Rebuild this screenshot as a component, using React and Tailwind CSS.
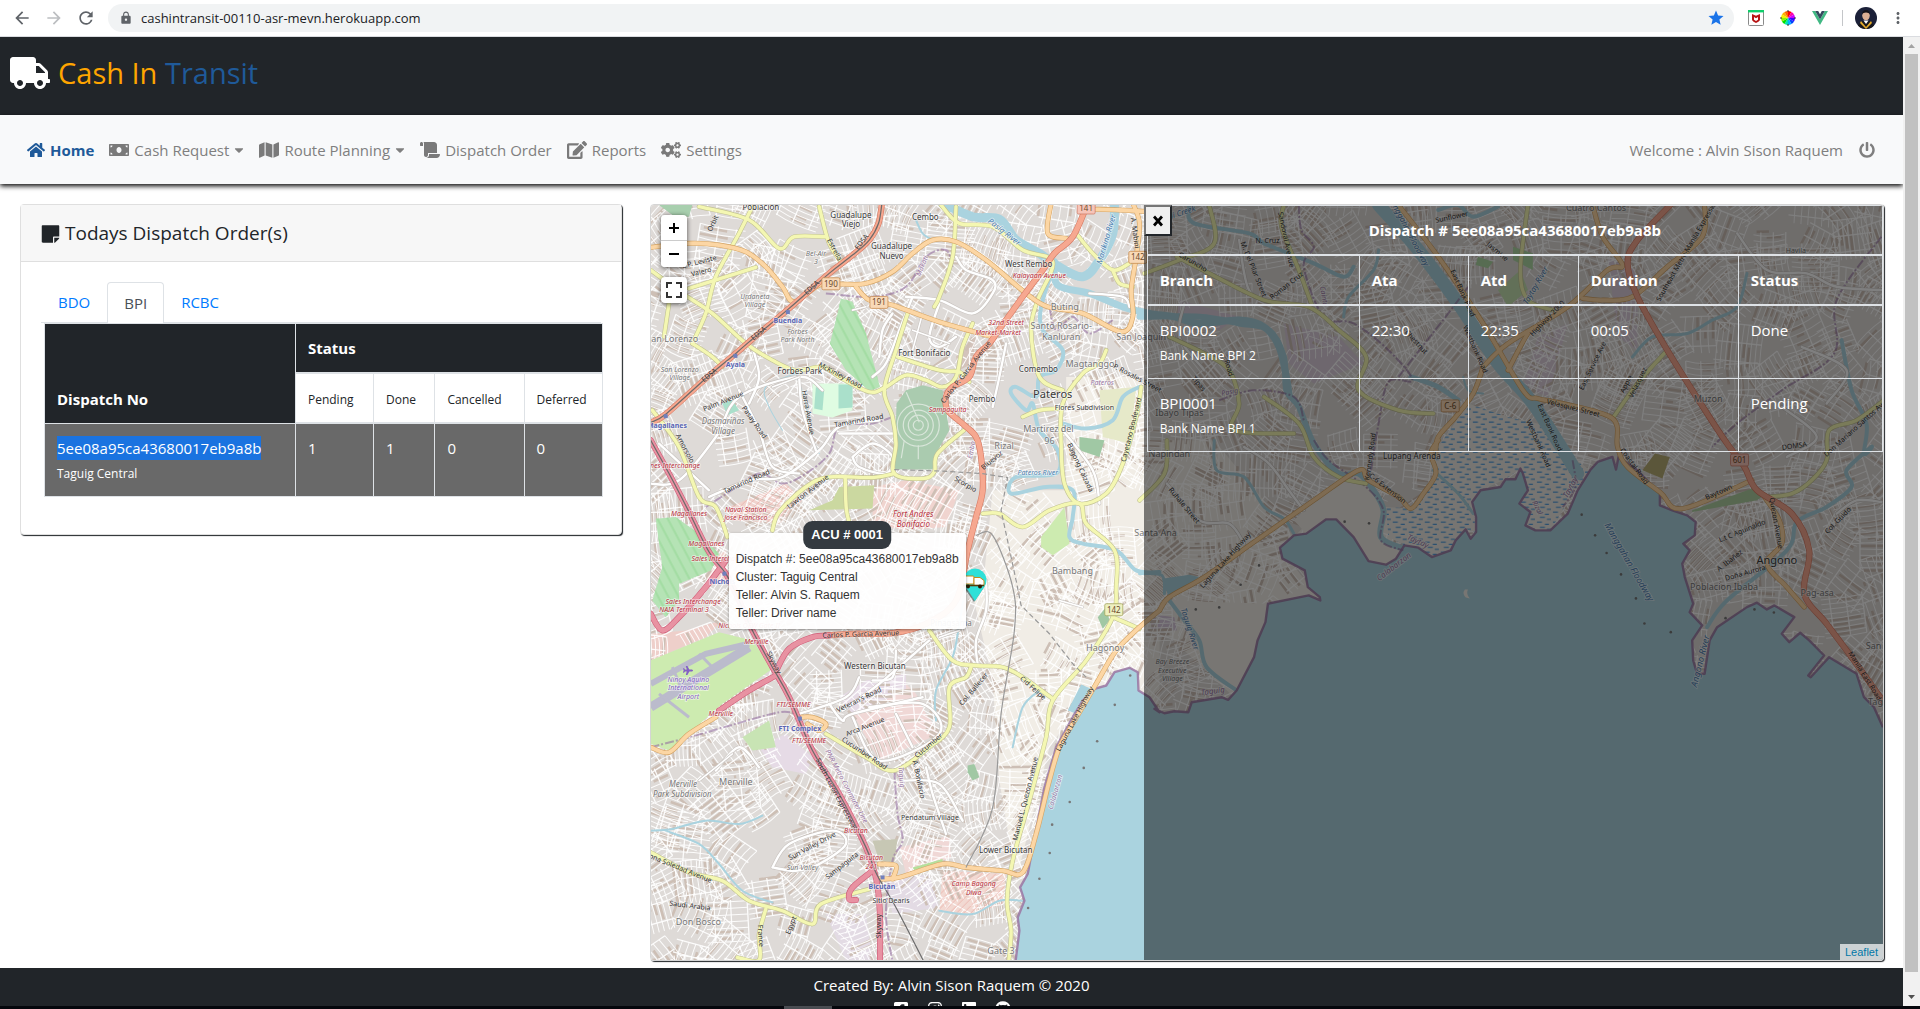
import React from "react";
import {
  FaTruck, FaHome, FaMoneyBill, FaMap, FaScroll, FaEdit, FaCogs, FaPowerOff,
  FaStickyNote, FaFacebookSquare, FaInstagram, FaLinkedin, FaGithub, FaCaretDown, FaPlane,
} from "react-icons/fa";
import { MdArrowBack, MdArrowForward, MdRefresh, MdLock, MdStar, MdMoreVert } from "react-icons/md";

/* ---------- Map geometry ---------- */

// Each survey sheet has its own origin and scale; shapes are stored in sheet units.
const SHEETS = {
  nw: [640, 190, 1 / 3, 1 / 3],
  sw: [640, 580, 1 / 3, 1 / 3],
  ne: [1140, 190, 0.4974, 1 / 3],
  se: [1140, 440, 0.4974, 1 / 3],
};

function project(sheet, x, y) {
  const [ox, oy, sx, sy] = SHEETS[sheet];
  return [Math.round((ox + x * sx) * 10) / 10, Math.round((oy + y * sy) * 10) / 10];
}

// "nw 1,2 3,4 sw 5,6" becomes a list of projected points.
function points(text) {
  let sheet = "nw";
  const out = [];
  for (const token of text.trim().split(/\s+/)) {
    if (SHEETS[token]) sheet = token;
    else {
      const [x, y] = token.split(",").map(Number);
      out.push(project(sheet, x, y));
    }
  }
  return out;
}

function area(text) {
  return "M" + points(text).map((p) => p.join(",")).join("L") + "Z";
}

function line(text) {
  return "M" + points(text).map((p) => p.join(",")).join("L");
}

function curve(text) {
  const p = points(text);
  let d = `M${p[0].join(",")}`;
  for (let i = 0; i < p.length - 1; i++) {
    const a = p[i - 1] || p[i];
    const b = p[i];
    const c = p[i + 1];
    const e = p[i + 2] || c;
    const r = (n) => Math.round(n * 10) / 10;
    d += `C${r(b[0] + (c[0] - a[0]) / 6)},${r(b[1] + (c[1] - a[1]) / 6)} ${r(c[0] - (e[0] - b[0]) / 6)},${r(c[1] - (e[1] - b[1]) / 6)} ${c[0]},${c[1]}`;
  }
  return d;
}

const SHORE =
  "sw 1128,1145 1140,1050 1135,1010 1155,960 1142,920 1165,880 1180,800 1215,620 1250,500 1300,410 1330,360 1365,325 1400,315 1425,275 1470,262 1495,275 1497,330 1530,350 1560,395 " +
  "se 30,805 50,818 70,812 98,815 105,785 165,770 178,778 195,750 230,650 237,600 253,545 258,490 340,465 363,480 362,470 338,440 332,390 287,355 282,322 310,285 335,280 375,237 395,237 430,290 460,362 495,373 515,355 532,315 560,322 587,350 625,330 635,300 655,267 665,295 676,275 676,230 668,185 685,150 725,140 735,117 755,117 765,85 770,100 780,150 763,190 785,215 775,255 795,270 825,270 860,220 880,150 905,90 920,65 950,50 957,88 962,50 1000,90 1045,160 1045,195 1070,210 1100,225 1117,245 1115,285 1092,310 1105,330 1090,370 1095,410 1112,490 1105,515 1130,555 1110,600 1112,660 1120,700 1135,700 1145,600 1160,560 1220,500 1240,487 1260,507 1275,495 1315,530 1290,580 1305,605 1327,577 1345,600 1375,645 1343,705 1348,710 1385,650 1440,700 1455,770 1475,800 1493,860";

const LAKE = SHORE + " 1493,1570 sw 1128,1145";

const MOTORWAY = [
  "nw 35,750 90,850 150,965 210,1085 260,1150 sw 300,60 340,150 400,260 450,350 520,510 600,640 680,800 712,900 722,1000 722,1145",
  "sw 412,270 450,205 520,170 570,165",
  "sw 410,285 330,330 240,390",
  "sw 35,100 70,150 120,110 200,20 260,-60",
  "sw 700,870 640,920 630,955 650,958",
];

const TRUNK = [
  "nw 728,40 718,100 690,150 640,195 570,250 450,355 330,455 290,490 200,565 80,672 35,697",
  "sw 560,165 640,160 760,158 860,130 950,60 nw 985,1080 1010,980 1030,900 1025,800 1010,740 975,705 925,660 920,620 940,590 990,560 1010,500 1050,460 1085,410 1150,320 1210,240 1245,190 1300,140 1345,40",
  "ne 1068,42 1000,150 980,220 1000,320 1060,480 1140,670 1180,760 1215,830 se 1240,150 1310,220 1345,330 1335,460 1380,550 1430,650 1495,785",
];

const PRIMARY = [
  "nw 35,172 150,160 240,165 320,185 380,230 430,290 465,335 540,285 600,282 680,280 760,245 820,190 880,150 950,155 1040,210 1160,310 1225,350 1330,370 1445,425 1480,380 1475,300 1490,200 1500,100 1480,40",
  "nw 650,290 690,330 760,345 900,395 1060,440",
  "nw 1235,40 1225,130 1280,145",
  "nw 1370,58 1440,60 1530,65",
  "sw 1560,90 1500,140 1430,210 1370,310 1300,430 1260,500 1230,600 1190,760 1150,875 1090,870 980,860 910,850 780,890 720,895",
  "sw 1560,90 se 60,470 130,410 230,305 350,180 440,90 460,120 520,170 545,205 570,160 595,100 585,40 600,0",
  "sw 35,500 90,515 150,460 230,410",
  "ne 520,45 600,200 690,400 770,600 800,625 850,640 950,685 960,770 980,830 se 1045,155 1090,205 1230,120",
  "ne 690,530 740,460 860,350 940,240 970,225 930,140 910,45",
  "ne 1135,45 1130,140 1060,230 990,320 930,330 890,325",
  "ne 690,530 670,610 635,680 600,740 595,790",
  "ne 740,540 780,430 800,410",
  "se 1255,170 1285,240 1290,310 1260,370 1300,440 1335,500",
  "sw 485,410 520,410 560,430 540,450 505,430",
  "sw 720,850 770,855 760,895",
];

const SECONDARY = [
  "nw 180,50 330,90 420,175 465,140 560,140",
  "nw 340,50 300,130 230,260 200,370 160,460",
  "nw 150,295 350,232",
  "nw 35,240 130,310 220,370 320,460 400,510 470,540 550,530 600,560 690,605 740,590 800,555 860,570 910,590 950,560 970,470 1000,400",
  "nw 90,340 75,440",
  "nw 160,460 220,500 250,530",
  "nw 540,50 570,160 610,220",
  "nw 950,50 940,200 900,320 885,350",
  "nw 805,370 770,480 735,600 760,680 770,760 765,850 850,865 885,845 895,790 980,715",
  "nw 765,850 700,862 570,860 500,890 420,965 400,1020",
  "nw 618,862 622,960 640,1030",
  "nw 775,500 900,540 960,545 990,575",
  "nw 905,45 960,100 1060,110 1150,180 1240,215 1195,330 1175,420 1200,560 1270,600",
  "nw 1400,480 1380,520 1330,550 1270,640 1265,760 1275,880 1320,940 1400,910 1450,820 1490,680 1505,590",
  "nw 1150,680 1200,660 1265,655",
  "nw 1030,970 1080,970 1150,1010 1230,960 1320,940 1340,1000 1425,1080 1430,1190 sw 1420,110 1340,240 1240,360 1220,470 1170,660 1120,840 1103,960 1115,1050 1108,1145",
  "nw 1310,130 1360,190 1420,240 1470,220",
  "nw 1420,240 1440,280 1480,290",
  "sw 870,150 940,240 1010,255 1090,260 1150,290 1240,355",
  "sw 995,260 980,290 930,320 930,440 870,500 765,570 680,530 560,460",
  "sw 35,815 150,875 250,900 330,960 430,990 520,1030 545,970 690,925",
  "sw 380,985 360,1060 360,1138 295,1130",
  "sw 1420,110 1500,145",
  "nw 40,660 120,770 180,920 230,950 265,1040",
  "ne 10,250 80,210 150,160 140,45",
  "ne 75,200 140,250 250,330 340,350 400,420 455,500 440,600 520,660 590,670",
  "ne 290,45 285,110 320,240 345,340",
  "ne 60,440 130,490 180,540 200,640 190,720 310,730",
  "ne 780,45 765,240 780,330 830,360",
  "ne 1060,480 1000,580 950,685",
  "ne 1495,630 1440,690 1385,720 se 1380,60 1350,120 1310,160 1260,170",
  "ne 250,620 320,700 350,800 400,860 se 455,130",
  "se 55,0 50,100 0,180",
];

const STREETS = [
  "nw 800,320 900,330 1000,370 1060,310 1060,270 980,240 950,200",
  "nw 820,320 780,420 740,520 700,560", "nw 900,340 870,440 900,470 950,440",
  "nw 720,500 730,420 760,370", "nw 30,880 120,870 230,740 300,620 480,560 550,600",
  "nw 300,600 360,720 400,830 480,850", "nw 480,560 490,660 530,780",
  "nw 210,920 330,870 430,860 540,780 600,710 720,690", "nw 600,730 760,730",
  "nw 640,800 700,760 760,800 740,850 660,830 640,800", "nw 340,470 360,560 330,640",
  "nw 1100,460 1080,560 1060,650", "nw 1350,310 1450,320 1470,350",
  "nw 1270,720 1360,840 1380,940", "nw 60,760 210,900",
  "sw 570,370 610,420 640,400 850,350", "sw 690,380 850,370 900,460 720,540 640,410",
  "sw 770,400 820,500", "sw 610,390 720,310 870,180", "sw 770,210 760,290 700,300",
  "sw 480,400 620,350 660,290", "sw 1040,0 1040,90 1010,180 1015,250",
  "sw 400,860 450,790 580,750 620,790 540,850 470,870 400,860",
  "sw 790,600 900,610 970,720", "sw 230,570 300,500 360,560", "sw 860,560 880,640 920,760",
  "ne 90,340 80,440 130,540", "ne 200,150 220,300 270,340", "ne 1200,130 1260,240 1340,250 1400,290 1490,300",
  "ne 1330,470 1420,540 1380,640", "se 55,130 120,240 180,250 210,310", "ne 1290,650 1360,740 1300,800",
  "se 1400,220 1440,180 1490,185", "se 210,20 260,70 300,150 330,210",
];

const WHITE_ALLEYS = [
  "nw 820,420 930,460", "nw 850,370 820,480", "nw 640,360 680,350", "nw 400,590 480,560",
  "sw 180,600 280,520", "sw 900,170 960,150", "sw 1260,60 1330,80",
];

const RIVERS = [
  { d: "nw 910,40 1000,80 1080,88 1130,150 1200,190 1250,225 1330,260 1380,210 1420,130 1425,40", w: 9 },
  { d: "nw 1245,215 1255,285 1350,310 1450,350 1530,370 ne 70,380 120,400 200,390 250,410 280,470 295,560 300,610", w: 7 },
  { d: "nw 1240,240 1205,350 1210,420 1270,480 1250,540 1200,560 1190,620 1130,590 1115,610 1160,660 1180,640 1200,720 1255,780 1250,850 1130,860 1115,910 1220,890 1300,900 1300,980 1290,1040 1330,1060 1430,1080 1490,1140 1560,1145", w: 4 },
  { d: "nw 1270,700 1340,715 1420,690 1450,620 1500,590", w: 4 },
  { d: "nw 830,90 850,130 880,150", w: 2 },
  { d: "nw 470,550 380,590 390,650 430,720", w: 1 },
  { d: "nw 470,550 500,640 510,720 540,790", w: 1 },
  { d: "sw 35,750 100,745 200,720 300,730 370,705", w: 2 },
  { d: "sw 80,750 180,790 240,850 310,930 400,965", w: 2 },
  { d: "sw 980,10 960,130 940,230 890,330 890,420", w: 2 },
  { d: "sw 1200,330 1150,380 1120,500", w: 2 },
  { d: "sw 900,990 1000,1000 1080,960 1150,960", w: 2 },
  { d: "ne 480,45 560,180 640,340 720,520 790,640 880,850", w: 13 },
  { d: "ne 100,50 110,100 220,130 250,160 350,220 410,260 430,230", w: 4 },
  { d: "ne 600,60 640,45 670,80 720,50", w: 4 },
  { d: "ne 0,380 120,380 200,400 260,420 290,500 295,600 320,650 350,760 400,850 se 440,100 470,150 490,210 485,290 530,325", w: 6 },
  { d: "ne 410,380 420,320 470,240 480,180", w: 3 },
  { d: "ne 545,560 600,590 640,630", w: 5 },
  { d: "ne 990,500 1030,440 1100,430 1150,390 1200,350 1220,250", w: 3 },
  { d: "ne 1410,450 1430,600 1460,700 1455,790 se 1470,20 1420,90 1430,140 1380,200 1320,245 1300,330 1180,480 1140,560", w: 4 },
  { d: "se 150,0 155,90 210,110 250,200 290,235 310,280", w: 3 },
  { d: "se 60,480 90,540 120,600 135,680 195,750", w: 4 },
  { d: "se 0,400 45,405 50,460", w: 3 },
  { d: "se 590,90 640,160 670,220", w: 3 },
  { d: "ne 650,560 660,600 690,610", w: 2 },
];

const BORDERS = [
  "nw 560,310 700,320 800,290 860,200 920,180 940,230",
  "nw 1230,350 1250,420 1300,380 1350,430 1420,390",
  "nw 760,680 700,700 600,710 570,790 500,850 430,880 360,850 270,905 200,950",
  "sw 35,500 150,470 290,430 420,395 470,400",
  "sw 765,570 775,700 790,780 760,840 740,1000 760,1145",
  "ne 320,45 325,120 350,170 330,230 370,380 430,400 500,480 548,570 500,575 480,700 465,840",
  "ne 160,630 230,600 310,620 330,690",
  "ne 1490,140 1400,330 1395,490 1290,600 1200,700 1150,770",
  "ne 660,290 620,370 520,560",
  "se 350,0 380,60 455,140 490,210 485,300 530,330",
  "se 870,60 875,140 850,200",
];

const GREENS = [
  { d: "nw 605,325 640,335 680,430 722,590 690,602 620,540 572,460 595,370", c: "#b5e3b5" },
  { d: "nw 800,600 850,585 910,600 930,720 890,790 880,838 765,838 772,640", c: "#aacbaf" },
  { d: "nw 50,985 110,980 180,1030 240,1090 215,1140 120,1180 sw 120,60 80,110 40,60 nw 70,1130", c: "#b5e3b5" },
  { d: "nw 520,580 640,580 640,660 580,682 520,670", c: "#dffce2" },
  { d: "nw 530,590 555,600 550,660 525,655", c: "#aae0cb" },
  { d: "nw 598,583 640,583 640,652 598,655", c: "#aae0cb" },
  { d: "nw 250,640 280,630 300,660 265,675", c: "#aae0cb" },
  { d: "nw 600,890 705,885 700,955 510,960 580,930", c: "#cbd8a0" },
  { d: "nw 1205,1040 1275,950 1290,1060 1240,1095 1205,1070", c: "#cdebb0" },
  { d: "nw 1320,740 1395,750 1380,800 1320,780", c: "#a0c8a4" },
  { d: "nw 1380,600 1490,590 1470,760 1390,740", c: "#e6e9c9" },
  { d: "nw 60,45 160,45 150,80 100,75", c: "#a8cfae" },
  { d: "sw 35,240 240,155 340,180 400,265 250,370 160,450 90,510 35,490", c: "#cdebb0" },
  { d: "sw 310,470 390,420 410,500 340,510", c: "#c8e4b4" },
  { d: "sw 700,780 775,775 765,845 720,840", c: "#c7c7b4" },
  { d: "sw 820,860 910,835 910,850 825,868", c: "#b5df9c" },
  { d: "sw 985,555 1005,550 1020,590 1000,600 985,575", c: "#a0c8a4" },
  { d: "sw 1375,110 1400,80 1410,120 1390,145", c: "#a0c8a4" },
  { d: "ne 750,170 790,190 790,240 750,210", c: "#aed8a4" },
  { d: "ne 680,200 710,215 700,235 675,225", c: "#aed8a4" },
  { d: "ne 720,300 765,240 780,300 740,350", c: "#c4e0b0" },
  { d: "se 1035,40 1065,50 1050,115 1010,90", c: "#b7ac74" },
  { d: "se 1110,210 1230,145 1260,160 1240,180 1110,215", c: "#aecfa0" },
];

const ZONES = [
  { d: "nw 270,950 440,880 490,930 420,1000 280,990", c: "#f0d4cf" },
  { d: "nw 700,890 800,870 960,900 920,1010 800,1020 700,1000", c: "#f0d4cf" },
  { d: "nw 210,1110 260,1080 270,1170 200,1190", c: "#f0d4cf" },
  { d: "sw 35,160 140,150 250,120 200,170 35,240", c: "#eecfca" },
  { d: "sw 640,400 720,370 790,300 830,340 860,400 900,460 720,540", c: "#f0d8d6" },
  { d: "sw 600,350 680,300 800,280 800,330 640,400", c: "#e6dbe6" },
  { d: "sw 360,500 440,460 520,530 500,580 400,560", c: "#e6dbe6" },
  { d: "sw 780,800 930,765 935,830 800,880", c: "#f0d8d6" },
  { d: "sw 910,870 1100,880 1090,970 1000,1000 900,990", c: "#f2d9d2" },
  { d: "sw 740,900 870,880 900,980 760,1000", c: "#e3dbe4" },
  { d: "sw 560,1000 680,1000 700,1140 620,1140", c: "#e3dbe4" },
  { d: "ne 290,400 400,440 450,520 350,580 300,520", c: "#dccedc" },
  { d: "ne 80,330 200,380 160,420 70,380", c: "#dccedc" },
  { d: "ne 940,200 1000,240 1000,480 960,440", c: "#dccedc" },
  { d: "ne 800,440 860,400 820,620 770,590", c: "#dfd0dd" },
  { d: "se 20,520 70,530 75,570 25,570", c: "#d8c8dc" },
  { d: "nw 950,500 1010,430 1000,520 960,540", c: "#d3c3bb" },
];

const FIELDS = [
  "nw 1280,560 1500,560 1560,900 1560,1200 1030,1200 1060,900 1280,900",
  "sw 990,0 1560,0 1560,395 1330,360 1230,500 1130,900 1080,600 1060,300",
  "se 0,0 150,0 310,290 440,90 530,320 460,370 380,237 282,322 363,480 258,490 190,770 40,560 0,500",
];

const WETLAND =
  "ne 660,640 740,680 800,700 870,800 se 905,90 875,150 825,270 795,270 775,255 785,215 763,190 780,150 765,85 735,117 685,150 668,185 676,275 655,267 625,330 587,350 532,315 500,290 495,200 545,205 600,100 590,20 ne 605,760";

// Text, sheet, x, y, size, kind, turn in degrees.
const LABELS = [
  ["Poblacion", "nw", 365, 60, 8, "town"], ["Guadalupe", "nw", 635, 83, 8, "town"], ["Viejo", "nw", 635, 112, 8, "town"],
  ["Cembo", "nw", 858, 91, 8, "town"], ["Guadalupe", "nw", 757, 178, 8, "town"], ["Nuevo", "nw", 757, 207, 8, "town"],
  ["West Rembo", "nw", 1168, 232, 8, "town"], ["Kalayaan Avenue", "nw", 1200, 265, 7, "red"],
  ["Bel-Air", "nw", 530, 198, 7, "sub"], ["3", "nw", 530, 222, 7, "sub"],
  ["Urdaneta", "nw", 347, 327, 7, "sub"], ["Village", "nw", 347, 352, 7, "sub"],
  ["Buendia", "nw", 446, 399, 7, "rail"], ["Ayala", "nw", 289, 531, 7, "rail"],
  ["Forbes", "nw", 475, 431, 7, "sub"], ["Park North", "nw", 475, 456, 7, "sub"],
  ["San Lorenzo", "nw", 100, 455, 9, "minor"], ["San Lorenzo", "nw", 122, 545, 7, "sub"], ["Village", "nw", 122, 570, 7, "sub"],
  ["Forbes Park", "nw", 482, 552, 8, "town"], ["Fort Bonifacio", "nw", 855, 498, 8, "town"],
  ["32nd Street", "nw", 1100, 404, 7, "red"], ["Market-Market", "nw", 1076, 436, 7, "red"],
  ["Buting", "nw", 1276, 359, 9, "minor"], ["Santo Rosario-", "nw", 1265, 416, 9, "minor"], ["Kanluran", "nw", 1265, 451, 9, "minor"],
  ["San Joaquin", "nw", 1505, 449, 9, "minor"], ["Magtanggol", "nw", 1355, 530, 9, "minor"], ["Comembo", "nw", 1197, 547, 8, "town"],
  ["Pateros", "nw", 1388, 586, 7, "purple"], ["Pateros", "nw", 1240, 623, 11, "town"], ["Pembo", "nw", 1028, 635, 8, "town"],
  ["Flores Subdivision", "nw", 1335, 658, 7, "town"], ["Sampaguita", "nw", 925, 665, 7, "red"],
  ["Dasmariñas", "nw", 252, 702, 8, "sub"], ["Village", "nw", 252, 732, 8, "sub"],
  ["Magallanes", "nw", 84, 712, 7, "rail"], ["Martirez del", "nw", 1227, 726, 9, "minor"], ["96", "nw", 1230, 761, 9, "minor"],
  ["Rizal", "nw", 1094, 776, 9, "minor"], ["Magallanes Interchange", "nw", 70, 834, 7, "red"],
  ["Pateros River", "nw", 1195, 855, 7, "water"], ["Magallanes", "nw", 150, 978, 7, "red"],
  ["Naval Station", "nw", 320, 964, 7, "red"], ["Jose Francisco", "nw", 320, 989, 7, "red"],
  ["Fort Andres", "nw", 822, 980, 8, "red"], ["Bonifacio", "nw", 822, 1010, 8, "red"],
  ["Magallanes", "nw", 202, 1066, 7, "red"], ["Sales Interchange", "nw", 240, 1113, 7, "red"],
  ["Bambang", "nw", 1299, 1151, 9, "minor"], ["Santa Ana", "nw", 1548, 1037, 9, "minor"],
  ["Nichols", "nw", 250, 1182, 7, "rail"],
  ["EDSA", "nw", 673, 160, 7, "road", -52], ["EDSA", "nw", 522, 298, 7, "road", -42], ["EDSA", "nw", 363, 435, 7, "road", -40], ["EDSA", "nw", 215, 560, 7, "road", -40],
  ["Orbit", "nw", 228, 103, 7, "road", -65], ["L.P. Leviste", "nw", 182, 222, 7, "road", -14], ["Valero", "nw", 188, 252, 7, "road", -14],
  ["Estrella", "nw", 580, 182, 7, "road", 62], ["McKinley Road", "nw", 600, 562, 7, "road", 28], ["Palm Avenue", "nw", 255, 640, 7, "road", -22],
  ["Pasay Road", "nw", 340, 700, 7, "road", 55], ["Harra Avenue", "nw", 500, 668, 7, "road", 80], ["Tamarind Road", "nw", 660, 698, 7, "road", -10],
  ["Amorsolo", "nw", 132, 778, 7, "road", 62], ["Tamarind Road", "nw", 325, 880, 7, "road", -24], ["Lawton Avenue", "nw", 510, 910, 7, "road", -38],
  ["Carlos P. Garcia Avenue", "nw", 985, 550, 7, "road", -52], ["Makati", "nw", 855, 230, 7, "purple", -68], ["Embo", "nw", 1003, 780, 7, "purple", -80],
  ["Pasig River", "nw", 1090, 132, 8, "water", 38], ["Marikina River", "nw", 1408, 150, 8, "water", -74],
  ["Bagong Calzada", "nw", 1316, 835, 7, "road", 65], ["Cayetano Boulevard", "nw", 1482, 720, 7, "road", -76], ["Scorpio", "nw", 975, 888, 7, "road", 30],
  ["Bluevoz", "nw", 1062, 815, 7, "road", -40], ["P. Rosales Street", "nw", 1490, 570, 7, "road", 28], ["A. Mabini", "nw", 1480, 130, 7, "road", 82],
  ["Sales Interchange", "sw", 162, 70, 7, "red"], ["NAIA Terminal 3", "sw", 135, 94, 7, "red"], ["Nichols OFW Gate II", "sw", 330, 144, 7, "red"],
  ["Merville", "sw", 352, 192, 7, "red"], ["Carlos P. Garcia Avenue", "sw", 665, 168, 7, "road", -2], ["Pinagsama", "sw", 935, 138, 8, "minor"],
  ["Hagonoy", "sw", 1397, 213, 9, "minor"], ["Western Bicutan", "sw", 707, 267, 8, "town"],
  ["Ninoy Aquino", "sw", 148, 304, 7, "violet"], ["International", "sw", 148, 329, 7, "violet"], ["Airport", "sw", 148, 354, 7, "violet"],
  ["FTI/SEMME", "sw", 463, 378, 7, "red"], ["Merville", "sw", 245, 406, 7, "red"], ["FTI Complex", "sw", 482, 450, 7, "rail"], ["FTI/SEMME", "sw", 510, 488, 7, "red"],
  ["Veteran's Road", "sw", 662, 364, 7, "road", -26], ["Arca Avenue", "sw", 680, 445, 7, "road", -22], ["Col. Ballecer", "sw", 1008, 330, 7, "road", -50],
  ["Cucumber Road", "sw", 672, 524, 7, "road", 34], ["Cucumber", "sw", 872, 500, 7, "road", -40], ["Cid Felipe", "sw", 1176, 328, 7, "road", 42],
  ["Merville", "sw", 290, 614, 9, "minor"], ["Merville", "sw", 132, 620, 8, "sub"], ["Park Subdivision", "sw", 130, 650, 8, "sub"],
  ["South Luzon Expressway", "sw", 586, 645, 7, "road", 62], ["Skyway", "sw", 398, 250, 7, "road", 62], ["Skyway", "sw", 726, 1036, 7, "road", -90],
  ["PNR Metro Commuter Line", "sw", 616, 620, 7, "purple", 62], ["A. Bonifacio", "sw", 832, 598, 7, "road", 78], ["Taguig", "sw", 780, 590, 7, "purple", 86],
  ["Pendatum Village", "sw", 872, 718, 7, "town"], ["Bicutan", "sw", 650, 758, 7, "red"], ["Bicutan", "sw", 696, 838, 7, "red"], ["241", "sw", 696, 864, 7, "red"],
  ["Lower Bicutan", "sw", 1099, 817, 8, "town"], ["Sun Valley Drive", "sw", 522, 802, 7, "road", -28], ["Sun Valley", "sw", 490, 868, 7, "sub"],
  ["Sampaguita", "sw", 612, 860, 7, "road", -38], ["Bicutan", "sw", 728, 924, 7, "rail"], ["Camp Bagong", "sw", 1003, 917, 7, "red"], ["Diwa", "sw", 1003, 942, 7, "red"],
  ["Sitio Dearis", "sw", 755, 967, 7, "town"], ["Saudi Arabia", "sw", 152, 982, 7, "road", 7], ["Don Bosco", "sw", 178, 1032, 9, "minor"],
  ["Dona Soledad Avenue", "sw", 115, 866, 7, "road", 22], ["France", "sw", 358, 1066, 7, "road", 86], ["Egypt", "sw", 462, 1036, 7, "road", -68],
  ["Gate 3", "sw", 1085, 1119, 9, "minor"], ["Manuel L. Quezon Avenue", "sw", 1165, 656, 7, "road", -76], ["Laguna Lake Highway", "sw", 1312, 418, 7, "road", -62],
  ["Calabarzon", "sw", 1254, 636, 7, "purple", -74],
  ["Cuatro Cantos", "ne", 917, 64, 9, "minor"], ["Buli Creek", "ne", 80, 78, 8, "water", -18], ["N. Cruz", "ne", 257, 158, 7, "road"],
  ["Sandoval Avenue", "ne", 290, 150, 7, "road", 78], ["Caruncho", "ne", 105, 222, 7, "road", 30], ["M. Del Pilar Street", "ne", 225, 240, 7, "road", 68],
  ["Roman Cruz", "ne", 298, 292, 7, "road", -38], ["Cainta", "ne", 366, 320, 7, "purple", 80], ["Sunflower", "ne", 628, 88, 7, "road", -12],
  ["East Bank Road", "ne", 645, 312, 7, "road", 66], ["Manggahan Floodway", "ne", 535, 125, 8, "water", 62], ["Taytay River", "ne", 800, 290, 8, "water", -60],
  ["Highway 2000", "ne", 822, 390, 7, "road", -46], ["Southeast Metro-Manila Expressway", "ne", 1105, 180, 7, "road", -60],
  ["Westbank Road", "ne", 670, 480, 7, "road", 66], ["East Bank Road", "ne", 820, 715, 7, "road", 66], ["Velasquez Street", "ne", 870, 660, 7, "road", 14],
  ["Velasquez", "ne", 1005, 580, 7, "road", -64], ["Westbank Road", "ne", 797, 762, 7, "road", 66], ["Pasig", "ne", 182, 612, 7, "purple", -10],
  ["Ibayo Tipas", "ne", 80, 678, 9, "minor"], ["Lupang Arenda", "ne", 547, 807, 8, "town"], ["Muzon", "ne", 1142, 634, 9, "minor"],
  ["East Service Ave", "ne", 914, 530, 7, "road", -64], ["Don Mariano Santos Ave", "ne", 1440, 720, 7, "road", -42], ["DOMSA", "ne", 1316, 774, 7, "road", -8],
  ["Havila", "ne", 1318, 190, 7, "minor"], ["Napindan", "ne", 60, 800, 9, "minor"], ["Chestnut", "ne", 552, 460, 7, "road", 48], ["Jasmine", "ne", 716, 190, 7, "road", 40],
  ["Apple", "ne", 982, 585, 7, "road", -62], ["Tipas", "ne", 115, 585, 7, "road", 50], ["Road", "ne", 175, 535, 7, "road", 74],
  ["Ruhale Street", "se", 86, 200, 7, "road", 50], ["C-6 Extension", "se", 495, 150, 7, "road", 38], ["Laguna Lake Highway", "se", 176, 364, 7, "road", -48],
  ["Kennedy Road", "se", 468, 50, 7, "road", -82], ["Coastal Road", "se", 990, 82, 7, "road", 54], ["Baytown", "se", 1165, 162, 7, "road", -24],
  ["Taytay", "se", 557, 310, 8, "purple", 24], ["Taytay", "se", 870, 145, 8, "purple", -62], ["Rizal", "se", 795, 205, 7, "purple", 64], ["Calabarzon", "se", 514, 385, 8, "purple", -38],
  ["Manggahan Floodway", "se", 978, 370, 9, "water", 60], ["L.t C Aguinaldo", "se", 1212, 278, 7, "road", -22], ["A. Ibañez", "se", 1188, 366, 7, "road", -38],
  ["Doña Aurora", "se", 1218, 404, 7, "road", -16], ["Angono", "se", 1280, 370, 11, "town"], ["Quezon Avenue", "se", 1274, 250, 7, "road", 80],
  ["Poblacion Ibaba", "se", 1174, 448, 9, "minor"], ["Pag-asa", "se", 1361, 466, 9, "minor"], ["Col. Guido", "se", 1406, 245, 7, "road", -46],
  ["Angono River", "se", 1132, 664, 9, "water", -76], ["Manila East Road", "se", 1453, 710, 7, "road", 58], ["San", "se", 1474, 627, 9, "minor"], ["Tag", "se", 1478, 794, 9, "minor"],
  ["Taguig River", "se", 96, 568, 8, "water", 72], ["Bay Breeze", "se", 66, 672, 7, "sub"], ["Executive", "se", 66, 697, 7, "sub"], ["Village", "se", 66, 722, 7, "sub"],
  ["Taguig", "se", 148, 760, 8, "purple", -8],
];

const LABEL_STYLE = {
  town: { fill: "#3a3a3a" },
  minor: { fill: "#777777" },
  sub: { fill: "#777777", fontStyle: "italic" },
  red: { fill: "#b8303c", fontStyle: "italic" },
  rail: { fill: "#5a66b4", fontWeight: 700 },
  road: { fill: "#333333" },
  water: { fill: "#4d7fb0", fontStyle: "italic" },
  purple: { fill: "#9a78a5", fontStyle: "italic" },
  violet: { fill: "#8461c4", fontStyle: "italic" },
};

const SHIELDS = [
  ["190", "nw", 575, 281, "#f8d9b8", "#c98f52"], ["191", "nw", 719, 337, "#f8d9b8", "#c98f52"], ["141", "nw", 1340, 54, "#f6c4b8", "#d1806c"],
  ["142", "nw", 1495, 202, "#f8d9b8", "#c98f52"], ["142", "sw", 1423, 88, "#eef0c0", "#a5a860"], ["C-6", "ne", 624, 647, "#f8d9b8", "#c98f52"], ["601", "se", 1205, 59, "#f6c4b8", "#d1806c"],
];

// Deterministic generator for the residential street texture.
function makeRandom(seed) {
  let s = seed;
  return () => {
    s = (s * 1664525 + 1013904223) % 4294967296;
    return s / 4294967296;
  };
}

function buildTexture() {
  const rnd = makeRandom(110);
  const lanes = [];
  const wide = [];
  const blocks = [];
  for (let cy = 195; cy < 980; cy += 34) {
    for (let cx = 645; cx < 1900; cx += 36) {
      if (rnd() < 0.06) continue;
      const x = cx + rnd() * 22;
      const y = cy + rnd() * 22;
      const angle = rnd() * Math.PI;
      const c = Math.cos(angle);
      const s = Math.sin(angle);
      const at = (u, v) => `${(x + u * c - v * s).toFixed(1)},${(y + u * s + v * c).toFixed(1)}`;
      const half = 15 + rnd() * 9;
      const gap = 4 + rnd() * 4;
      const bend = (rnd() - 0.5) * 12;
      for (let v = -half; v <= half; v += gap) {
        lanes.push(`M${at(-half, v)}Q${at(0, v + bend)} ${at(half, v)}`);
        if (rnd() < 0.6) blocks.push(`M${at(-half * rnd(), v + gap / 2)}L${at(half * rnd(), v + gap / 2)}`);
      }
      for (let u = -half; u <= half; u += half * 0.8) wide.push(`M${at(u, -half)}L${at(u + bend / 3, half)}`);
    }
  }
  return { lanes: lanes.join(""), wide: wide.join(""), blocks: blocks.join("") };
}

const TEXTURE = buildTexture();

function Roads({ list, casing, fill, width }) {
  return (
    <g fill="none" strokeLinecap="round" strokeLinejoin="round">
      {list.map((d) => <path key={"c" + d} d={curve(d)} stroke={casing} strokeWidth={width + 1.2} />)}
      {list.map((d) => <path key={"f" + d} d={curve(d)} stroke={fill} strokeWidth={width} />)}
    </g>
  );
}

function MapDrawing() {
  return (
    <svg className="block h-full w-full" viewBox="652 205 1231 755" preserveAspectRatio="xMinYMin slice" role="img" aria-label="Street map">
      <defs>
        <pattern id="marsh" width="16" height="10" patternUnits="userSpaceOnUse">
          <path d="M1 2h5M9 4h4M4 7h5M11 9h4" stroke="#4b9be0" strokeWidth="1.2" />
        </pattern>
        <pattern id="golf" width="9" height="9" patternUnits="userSpaceOnUse" patternTransform="rotate(62)">
          <path d="M0 4h9" stroke="#a2dca2" strokeWidth="2" />
        </pattern>
        <pattern id="hatch" width="5" height="5" patternUnits="userSpaceOnUse" patternTransform="rotate(-45)">
          <path d="M0 2h5" stroke="#e8a8a0" strokeWidth="1" />
        </pattern>
      </defs>
      <rect x="652" y="205" width="1300" height="800" fill="#dedad7" />
      {FIELDS.map((d) => <path key={d} d={area(d)} fill="#f1ede6" />)}
      {ZONES.map((z) => <path key={z.d} d={area(z.d)} fill={z.c} />)}
      <path d={TEXTURE.blocks} stroke="#cdbfb5" strokeWidth="2.6" fill="none" />
      <path d={TEXTURE.lanes} stroke="#ffffff" strokeWidth="1" fill="none" opacity="0.9" />
      <path d={TEXTURE.wide} stroke="#ffffff" strokeWidth="1.3" fill="none" opacity="0.9" />
      <path d={area("se 60,480 258,490 253,545 230,650 195,750 135,680 100,560")} fill="#f1ede6" />
      <path d={area("se 395,120 440,92 480,160 490,300 530,320 515,355 495,373 460,362 430,290 395,237 375,237 335,280 310,240")} fill="#f1ede6" />
      {GREENS.map((g) => <path key={g.d} d={area(g.d)} fill={g.c} />)}
      <path d={area(GREENS[0].d)} fill="url(#golf)" />
      <path d={area(GREENS[2].d)} fill="url(#golf)" />
      <path d={area(ZONES[0].d)} fill="url(#hatch)" opacity="0.5" />
      <path d={area(ZONES[8].d)} fill="url(#hatch)" opacity="0.5" />
      <g fill="none" stroke="#d9e6da" strokeWidth="1.2">
        <circle cx="919" cy="425" r="5" />
        <circle cx="919" cy="425" r="10" />
        <circle cx="919" cy="425" r="15" />
        <circle cx="919" cy="425" r="21" />
        <path d="M907 392L920 422M902 458l3 -18M919 445v14" />
      </g>
      <g fill="none" stroke="#bbbbcc" strokeWidth="6">
        <path d={line("sw 35,380 330,200")} strokeWidth="9" />
        <path d={line("sw 35,310 200,220 330,190")} />
        <path d={line("sw 60,340 150,410")} strokeWidth="3" />
        <path d={line("sw 180,220 230,270")} strokeWidth="3" />
        <path d={line("sw 100,260 130,330")} strokeWidth="3" />
      </g>
      <path d={area(WETLAND)} fill="#eeebe4" />
      <path d={area(WETLAND)} fill="url(#marsh)" />
      <path d={area(LAKE)} fill="#aad3df" />
      <path d={area("sw 1285,390 1325,312 1362,328 1310,400")} fill="#aad3df" />
      <path d={area("se 45,415 100,403 120,410 60,475")} fill="#aad3df" />
      <path d="M1465 589q-3 4 1 8l4 1q-4 -4 -2 -9z" fill="#f1ede6" />
      <g fill="none" stroke="#aad3df" strokeLinecap="round" strokeLinejoin="round">
        {RIVERS.map((r) => <path key={r.d} d={curve(r.d)} strokeWidth={r.w} />)}
      </g>
      <path d={line(SHORE)} fill="none" stroke="#9a76a2" strokeWidth="2.4" strokeLinejoin="round" opacity="0.85" />
      <g fill="none" stroke="#9470a0" strokeWidth="2" opacity="0.6" strokeDasharray="9 2 2 2">
        {BORDERS.map((d) => <path key={d} d={curve(d)} />)}
      </g>
      <Roads list={STREETS} casing="#c9c4c0" fill="#ffffff" width={2.4} />
      <Roads list={WHITE_ALLEYS} casing="#c9c4c0" fill="#ffffff" width={1.6} />
      <Roads list={SECONDARY} casing="#c2c294" fill="#f4f7b2" width={3.4} />
      <Roads list={PRIMARY} casing="#d6a565" fill="#fcd6a4" width={3.8} />
      <Roads list={TRUNK} casing="#d67a64" fill="#f6a890" width={5} />
      <Roads list={MOTORWAY} casing="#cf5c78" fill="#e892a2" width={4.8} />
      <g fill="none" stroke="#6b6b6b" strokeWidth="1.2">
        <path d={curve(TRUNK[0])} />
        <path d={curve("nw 35,750 90,850 150,965 210,1085 260,1150 sw 300,60 340,150 400,260 450,350 520,510 600,640 680,800 712,880 770,980 855,1145")} />
        <path d={line("nw 765,838 900,842 1030,850 1105,862 1085,960 sw 1130,0 1145,75 1230,160 1300,250 1340,290")} strokeDasharray="5 3" stroke="#999" />
        <path d={curve("nw 1010,1035 1060,1035 1120,1190 sw 1125,150 1085,400 1060,680 980,860")} stroke="#999" />
      </g>
      <g fill="#777777">
        {["1426,373", "1373,482", "1333,562", "1291,664", "1238,732", "1231,817", "1200,894", "1166,982", "1472,285"].map((p) => {
          const [x, y] = project("sw", ...p.split(",").map(Number));
          return <circle key={p} cx={x} cy={y} r="1.3" />;
        })}
        {["888,223", "915,285", "938,338", "967,402", "997,474", "1014,549", "1067,575", "412,244", "461,249", "240,375", "203,433", "113,507", "160,501", "1235,507", "1274,516", "1177,533"].map((p) => {
          const [x, y] = project("se", ...p.split(",").map(Number));
          return <circle key={p} cx={x} cy={y} r="1.3" />;
        })}
      </g>
      <g fill="#7180bd">
        {[["nw", 446, 366], ["nw", 289, 497], ["nw", 80, 678], ["nw", 256, 1150], ["sw", 482, 414], ["sw", 730, 890]].map(([s, a, b]) => {
          const [x, y] = project(s, a, b);
          return <rect key={s + a} x={x - 2} y={y - 2} width="4" height="4" />;
        })}
      </g>
      <g fontFamily="'Noto Sans', 'Open Sans', sans-serif" textAnchor="middle">
        {LABELS.map(([text, sheet, a, b, size, kind, turn]) => {
          const [x, y] = project(sheet, a, b);
          return (
            <text key={text + x + y} x={x} y={y} fontSize={size} transform={turn ? `rotate(${turn} ${x} ${y})` : undefined}
              stroke="#ffffff" strokeOpacity={kind === "road" ? 0.15 : 0.55} strokeWidth="1.6" paintOrder="stroke" {...LABEL_STYLE[kind]}>
              {text}
            </text>
          );
        })}
        {SHIELDS.map(([text, sheet, a, b, fill, edge]) => {
          const [x, y] = project(sheet, a, b);
          return (
            <g key={text + x}>
              <rect x={x - 9} y={y - 6} width="18" height="12" rx="1.5" fill={fill} stroke={edge} strokeWidth="0.8" />
              <text x={x} y={y + 3} fontSize="8" fill="#6b4a2a">{text}</text>
            </g>
          );
        })}
      </g>
      <FaPlane x="684" y="665" size={10} color="#8461c4" />
    </svg>
  );
}

/* ---------- Browser frame ---------- */

function ShieldIcon() {
  return (
    <svg className="h-4 w-4" viewBox="0 0 16 16" aria-hidden="true">
      <rect x="0.5" y="1" width="15" height="14.5" rx="1" fill="#fff" stroke="#8a8a8a" />
      <rect x="0" y="0" width="16" height="2.4" fill="#0fcf6b" />
      <path d="M4 4l4 1.800L12 4v5.800c0 1.200-2 2.200-4 3.200-2-1-4-2-4-3.200z" fill="#b81414" />
      <path d="M6 7l2 1.200L10 7v2.800l-2 1.200-2-1.200z" fill="#fff" />
    </svg>
  );
}

function WheelIcon() {
  const colors = ["#ff0000", "#ff00aa", "#c800ff", "#4000ff", "#0040ff", "#00b0ff", "#00e5b0", "#00e000", "#90f000", "#f0f000", "#ffb000", "#ff6000"];
  return (
    <svg className="h-4 w-4" viewBox="-8 -8 16 16" aria-hidden="true">
      {colors.map((c, i) => (
        <path key={c} d="M0 0L0 -7A7 7 0 0 1 3.500 -6.060Z" fill={c} transform={`rotate(${i * 30})`} />
      ))}
      <path d="M0 -8v2M0 8v-2M-8 0h2M8 0h-2" stroke="#333" strokeWidth="1" />
    </svg>
  );
}

function VueIcon() {
  return (
    <svg className="h-4 w-4" viewBox="0 0 16 16" aria-hidden="true">
      <path d="M0 1h3.200L8 9.400 12.800 1H16L8 15z" fill="#41b883" />
      <path d="M3.200 1h3L8 4.200 9.800 1h3L8 9.400z" fill="#35495e" />
    </svg>
  );
}

function Avatar() {
  return (
    <svg className="h-[22px] w-[22px] rounded-full" viewBox="0 0 22 22" role="img" aria-label="Profile">
      <rect width="22" height="22" fill="#1b2038" />
      <path d="M2 22q1-8 9-8t9 8z" fill="#17171c" />
      <path d="M6 14l5 6 5-6 1 2-6 6-6-6z" fill="#e3a92b" />
      <path d="M8.500 13.500L11 17l2.500-3.500z" fill="#fff" />
      <ellipse cx="11" cy="8.500" rx="3.800" ry="4.800" fill="#dcae94" />
      <path d="M7 7.500Q7 3 11 3t4 4.500q-1-2-4-2t-4 2z" fill="#15121a" />
    </svg>
  );
}

function BrowserBar() {
  return (
    <div className="flex h-[37px] shrink-0 items-center border-b border-[#dadce0] bg-white font-['Open_Sans','Noto_Sans',sans-serif]">
      <div className="flex w-[108px] items-center gap-3 pl-3">
        <button type="button" aria-label="Back" className="text-[#5f6368]"><MdArrowBack className="h-5 w-5" /></button>
        <button type="button" aria-label="Forward" className="text-[#bcbec1]"><MdArrowForward className="h-5 w-5" /></button>
        <button type="button" aria-label="Reload" className="text-[#5f6368]"><MdRefresh className="h-5 w-5" /></button>
      </div>
      <div className="flex h-7 flex-1 items-center rounded-full bg-[#f1f3f4] pr-[9px] pl-[11px]">
        <MdLock className="h-[14px] w-[14px] text-[#5f6368]" />
        <input type="text" aria-label="Address" defaultValue="cashintransit-00110-asr-mevn.herokuapp.com" className="ml-2 flex-1 bg-transparent text-[13px] leading-5 text-[#202124] outline-none" />
        <MdStar className="h-[18px] w-[18px] text-[#1a73e8]" />
      </div>
      <div className="flex items-center pr-[13px] pl-[14px]">
        <div className="flex items-center gap-4 pr-[14px]">
          <ShieldIcon />
          <WheelIcon />
          <VueIcon />
        </div>
        <div className="flex items-center gap-3">
          <span className="h-4 w-px bg-[#c4c6c9]" />
          <Avatar />
          <button type="button" aria-label="Menu" className="text-[#5f6368]"><MdMoreVert className="h-[18px] w-[18px]" /></button>
        </div>
      </div>
    </div>
  );
}

function PageScrollbar() {
  return (
    <div className="flex w-[17px] shrink-0 flex-col items-center bg-[#f1f1f1]" aria-hidden="true">
      <svg className="h-[17px] w-[17px]" viewBox="0 0 17 17"><path d="M5 11h7L8.500 7z" fill="#a3a3a3" /></svg>
      <div className="mb-[17px] w-[13px] flex-1 bg-[#c1c1c1]" />
      <svg className="h-[17px] w-[17px]" viewBox="0 0 17 17"><path d="M5 6h7L8.500 10z" fill="#505050" /></svg>
    </div>
  );
}

/* ---------- Application ---------- */

const NAV = [
  { label: "Home", icon: FaHome, active: true },
  { label: "Cash Request", icon: FaMoneyBill, menu: true },
  { label: "Route Planning", icon: FaMap, menu: true },
  { label: "Dispatch Order", icon: FaScroll },
  { label: "Reports", icon: FaEdit },
  { label: "Settings", icon: FaCogs },
];

function NavBar() {
  return (
    <nav className="relative flex h-[69px] items-center justify-between bg-[#f8f9fa] pr-7 pl-[27px] text-[15px] leading-6 text-[#7f7f7f] shadow-[0_2px_5px_#000]">
      <ul className="flex items-center gap-[15px]">
        {NAV.map(({ label, icon: Icon, active, menu }) => (
          <li key={label}>
            <a href="#" className={active ? "flex items-center gap-[5px] font-bold text-[#1f5a99]" : "flex items-center gap-[5px]"}>
              <Icon className={active ? "h-[18px] w-[18px]" : "h-[18px] w-5 text-[#7a7a7a]"} />
              <span>{label}</span>
              {menu && <FaCaretDown className="h-[14px] w-[10px]" />}
            </a>
          </li>
        ))}
      </ul>
      <div className="flex items-center gap-4">
        <span>Welcome : Alvin Sison Raquem</span>
        <button type="button" aria-label="Log out"><FaPowerOff className="h-4 w-4" /></button>
      </div>
    </nav>
  );
}

function DispatchCard() {
  const edge = "border border-[#dee2e6]";
  return (
    <section className="self-start rounded border border-[#dfdfdf] bg-white pb-[37px] shadow-[1px_1px_1px_#212529]">
      <h2 className="flex h-[57px] items-center gap-[5px] border-b border-[#dfdfdf] bg-[#f7f7f7] px-5 pt-px text-[19px] text-[#212529]">
        <FaStickyNote className="h-5 w-[19px]" />
        Todays Dispatch Order(s)
      </h2>
      <div className="px-5 pt-5">
        <div role="tablist" className="flex border-b border-[#dee2e6] text-[15px] leading-6">
          <button type="button" role="tab" className="px-[17px] py-2 text-[#007bff]">BDO</button>
          <button type="button" role="tab" aria-selected="true" className="-mb-px rounded-t border border-b-0 border-[#dee2e6] bg-white px-4 py-2 text-[#495057]">BPI</button>
          <button type="button" role="tab" className="px-[17px] py-2 text-[#007bff]">RCBC</button>
        </div>
        <div className="-mr-0.5 pl-[3px]">
          <table className="w-full table-fixed border-collapse text-left text-[15px] leading-6">
            <colgroup>
              <col className="w-[45%]" /><col className="w-[14%]" /><col className="w-[11%]" /><col className="w-[16%]" /><col className="w-[14%]" />
            </colgroup>
            <thead>
              <tr>
                <th rowSpan={2} className={`${edge} bg-[#212529] p-3 align-bottom font-bold text-white`}>Dispatch No</th>
                <th colSpan={4} className={`${edge} border-b-2 bg-[#212529] p-3 font-bold text-white`}>Status</th>
              </tr>
              <tr>
                {["Pending", "Done", "Cancelled", "Deferred"].map((s) => (
                  <th key={s} className={`${edge} border-b-2 px-3 pt-4 pb-3 text-xs leading-5 font-normal text-[#212529]`}>{s}</th>
                ))}
              </tr>
            </thead>
            <tbody>
              <tr className="bg-[#696969] align-top text-white">
                <td className={`${edge} p-3`}>
                  <span className="block"><mark className="bg-[#1a73e0] py-0.5 text-white">5ee08a95ca43680017eb9a8b</mark></span>
                  <span className="block pt-1 text-xs leading-5">Taguig Central</span>
                </td>
                {[1, 1, 0, 0].map((n, i) => <td key={i} className={`${edge} p-3`}>{n}</td>)}
              </tr>
            </tbody>
          </table>
        </div>
      </div>
    </section>
  );
}

function VehicleMarker() {
  return (
    <svg className="h-9 w-6" viewBox="0 0 24 36" role="img" aria-label="Vehicle">
      <path d="M11 35L2 22A11 11 0 1 1 20 22Z" fill="#1c4a4a" opacity="0.6" />
      <path d="M12 34L2.500 19.500A11.500 11.500 0 1 1 21.500 19.500Z" fill="#2fe0d8" />
      <rect x="0" y="9" width="11" height="8" rx="1" fill="#fff" stroke="#c78c1b" />
      <path d="M11 10.500h6l4 3v5h-10z" fill="#fff" stroke="#c78c1b" />
      <path d="M0 18.500h21" stroke="#5a3c08" strokeWidth="1.600" />
      <circle cx="5" cy="19.500" r="2" fill="#2b1c05" />
      <circle cx="17" cy="19.500" r="2" fill="#2b1c05" />
    </svg>
  );
}

function VehiclePopup() {
  return (
    <div className="absolute top-[328px] left-[78px] rounded-[3px] bg-white/95 pt-[17px] pr-[7px] pb-[7px] pl-[7px] text-xs leading-[18px] whitespace-nowrap text-[#333] shadow-[0_1px_3px_rgba(0,0,0,0.4)]">
      <div className="absolute -top-3 left-1/2 -translate-x-1/2 rounded-[9px] bg-[#343a40] px-2 py-[5px] text-[13px] font-bold text-white">ACU # 0001</div>
      <p>Dispatch #: 5ee08a95ca43680017eb9a8b</p>
      <p>Cluster: Taguig Central</p>
      <p>Teller: Alvin S. Raquem</p>
      <p>Teller: Driver name</p>
    </div>
  );
}

const STOPS = [
  { code: "BPI0002", bank: "Bank Name BPI 2", ata: "22:30", atd: "22:35", duration: "00:05", status: "Done" },
  { code: "BPI0001", bank: "Bank Name BPI 1", ata: "", atd: "", duration: "", status: "Pending" },
];

function DispatchOverlay() {
  const edge = "border border-[#dee2e6]";
  return (
    <div className="absolute inset-y-0 right-0 w-[60%] bg-black/50 font-['Open_Sans','Noto_Sans',sans-serif] text-[15px] leading-6 text-white">
      <div className="pl-[3px]">
        <table className="w-full table-fixed border-collapse border-b border-[#dee2e6] text-left">
          <colgroup>
            <col className="w-[212px]" /><col className="w-[109px]" /><col className="w-[110px]" /><col className="w-[160px]" /><col />
          </colgroup>
          <thead>
            <tr><th colSpan={5} className={`${edge} border-b-2 p-3 text-center font-bold`}>Dispatch # 5ee08a95ca43680017eb9a8b</th></tr>
            <tr>
              {["Branch", "Ata", "Atd", "Duration", "Status"].map((h) => <th key={h} className={`${edge} border-b-2 p-3 font-bold`}>{h}</th>)}
            </tr>
          </thead>
          <tbody>
            {STOPS.map((s) => (
              <tr key={s.code} className="align-top">
                <td className={`${edge} p-3`}>
                  <span className="block">{s.code}</span>
                  <span className="block pt-1 text-xs leading-5">{s.bank}</span>
                </td>
                <td className={`${edge} p-3`}>{s.ata}</td>
                <td className={`${edge} p-3`}>{s.atd}</td>
                <td className={`${edge} p-3`}>{s.duration}</td>
                <td className={`${edge} p-3`}>{s.status}</td>
              </tr>
            ))}
          </tbody>
        </table>
      </div>
      <button type="button" aria-label="Close" className="absolute top-0 left-0 flex h-[31px] w-7 items-center justify-center border-2 border-t-[#767676] border-r-[#212529] border-b-[#212529] border-l-[#767676] bg-[#efefef]">
        <svg className="h-3 w-[10px]" viewBox="0 0 10 12" aria-hidden="true"><path d="M1 1.500L9 10.500M9 1.500L1 10.500" stroke="#000" strokeWidth="2.800" /></svg>
      </button>
    </div>
  );
}

function MapPanel() {
  const control = "flex h-[26px] w-[26px] items-center justify-center bg-white text-black";
  return (
    <section className="relative h-[757px] overflow-hidden rounded border border-[#d5d5d5] font-['Liberation_Sans',Arial,sans-serif] shadow-[1px_1px_1px_#212529]">
      <MapDrawing />
      <div className="absolute top-[10px] left-[10px] flex flex-col gap-[10px]">
        <div className="overflow-hidden rounded shadow-[0_1px_5px_rgba(0,0,0,0.65)]">
          <button type="button" aria-label="Zoom in" className={`${control} border-b border-[#ccc]`}>
            <svg className="h-3 w-3" viewBox="0 0 12 12"><path d="M6 1v10M1 6h10" stroke="#000" strokeWidth="2" /></svg>
          </button>
          <button type="button" aria-label="Zoom out" className={control}>
            <svg className="h-3 w-3" viewBox="0 0 12 12"><path d="M1 6h10" stroke="#000" strokeWidth="2" /></svg>
          </button>
        </div>
        <button type="button" aria-label="Full screen" className={`${control} rounded shadow-[0_1px_5px_rgba(0,0,0,0.65)]`}>
          <svg className="h-4 w-4" viewBox="0 0 16 16"><path d="M1 6V1h5M10 1h5v5M15 10v5h-5M6 15H1v-5" fill="none" stroke="#333" strokeWidth="2" /></svg>
        </button>
      </div>
      <div className="absolute top-[362px] left-[312px]"><VehicleMarker /></div>
      <VehiclePopup />
      <DispatchOverlay />
      <div className="absolute right-0 bottom-0 bg-white/70 px-[5px] text-[11px] leading-4">
        <a href="#" className="text-[#0078a8]">Leaflet</a>
      </div>
    </section>
  );
}

function Footer() {
  const links = [["Facebook", FaFacebookSquare], ["Instagram", FaInstagram], ["LinkedIn", FaLinkedin], ["GitHub", FaGithub]];
  return (
    <footer className="flex flex-col items-center gap-1 bg-[#212529] pt-[5px] pb-5 text-[15px] leading-6 text-white">
      <p>Created By: Alvin Sison Raquem © 2020</p>
      <div className="flex gap-[18px]">
        {links.map(([name, Icon]) => <a key={name} href="#" aria-label={name}><Icon className="h-4 w-4" /></a>)}
      </div>
    </footer>
  );
}

export default function App() {
  return (
    <div className="flex h-screen flex-col overflow-hidden bg-white">
      <BrowserBar />
      <div className="flex min-h-0 flex-1">
        <div className="min-w-0 flex-1 overflow-hidden font-['Open_Sans','Noto_Sans',sans-serif]">
          <header className="flex h-[78px] items-start bg-[#212529] px-[10px] pt-4">
            <h1 className="flex items-center gap-2 text-[29px] leading-10 text-[#ffa500]">
              <FaTruck className="h-8 w-10 text-white" />
              <span>Cash In <span className="text-[#1f5a99]">Transit</span></span>
            </h1>
          </header>
          <NavBar />
          <main className="grid grid-cols-[39fr_80fr] gap-7 pt-5 pr-[19px] pb-[7px] pl-5">
            <DispatchCard />
            <MapPanel />
          </main>
          <Footer />
        </div>
        <PageScrollbar />
      </div>
      <div className="flex h-[3px] shrink-0 justify-center bg-[#05070c]" aria-hidden="true">
        <div className="mr-[304px] w-12 bg-[#4a4d52]" />
      </div>
    </div>
  );
}
